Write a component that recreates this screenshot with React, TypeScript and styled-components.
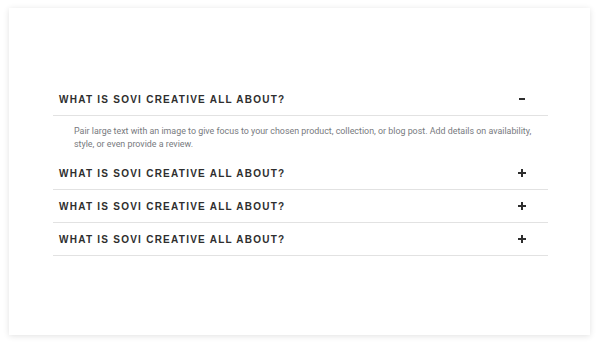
import React, { useState } from 'react';
import styled, { createGlobalStyle } from 'styled-components';

const GlobalStyle = createGlobalStyle`
  html, body {
    margin: 0;
    padding: 0;
    background: #ffffff;
  }
`;

const Page = styled.div`
  padding: 8px 10px 12px 9px;
`;

const Card = styled.div`
  height: 327px;
  box-sizing: border-box;
  background: #fff;
  box-shadow: 0 1px 6px rgba(0, 0, 0, 0.12);
  padding: 75px 42px 0 44px;
`;

const Item = styled.div`
  border-bottom: 1px solid #e2e2e2;
`;

const Header = styled.button`
  display: flex;
  align-items: center;
  justify-content: space-between;
  width: 100%;
  height: 32px;
  padding: 0 22px 0 6px;
  border: none;
  background: none;
  cursor: pointer;
  font-family: 'Liberation Sans', Arial, sans-serif;
  font-weight: bold;
  font-size: 10px;
  letter-spacing: 1.25px;
  color: #2e2e2e;
  text-align: left;
`;

const Body = styled.div`
  padding: 9px 10px 6px 21px;
  font-family: Roboto, 'Liberation Sans', sans-serif;
  font-size: 8.9px;
  line-height: 13px;
  color: #777a7e;
`;

const Icon = ({ open }: { open: boolean }) => (
  <svg width="8" height="8" viewBox="0 0 8 8">
    {open ? (
      <rect x="1" y="3" width="6" height="2" fill="#2e2e2e" />
    ) : (
      <>
        <rect x="0" y="3" width="8" height="2" fill="#2e2e2e" />
        <rect x="3" y="0" width="2" height="8" fill="#2e2e2e" />
      </>
    )}
  </svg>
);

const items = [0, 1, 2, 3];

export default function App() {
  const [openIndex, setOpenIndex] = useState<number | null>(0);

  return (
    <>
      <GlobalStyle />
      <Page>
        <Card>
          {items.map((i) => {
            const open = openIndex === i;
            return (
              <div key={i}>
                <Item>
                  <Header onClick={() => setOpenIndex(open ? null : i)}>
                    <span>WHAT IS SOVI CREATIVE ALL ABOUT?</span>
                    <Icon open={open} />
                  </Header>
                </Item>
                {open && (
                  <Body>
                    Pair large text with an image to give focus to your chosen product, collection, or blog
                    post. Add details on availability, style, or even provide a review.
                  </Body>
                )}
              </div>
            );
          })}
        </Card>
      </Page>
    </>
  );
}
